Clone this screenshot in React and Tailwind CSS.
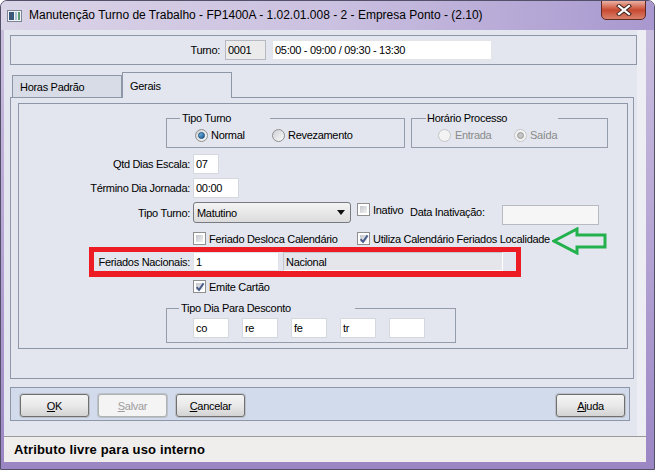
import React from "react";

function Checkbox({ checked }) {
  return (
    <span className="relative block w-[13px] h-[13px] shrink-0 border border-[#8e8f8f] bg-white p-[2px]">
      <span className="block w-full h-full bg-gradient-to-br from-[#c2c6cc] to-[#f2f2f2]" />
      {checked && (
        <svg className="absolute left-[1px] top-[1px]" width="10" height="10" viewBox="0 0 10 10">
          <path d="M1.6 5.2 L4 7.9 L8.6 1.4" fill="none" stroke="#4a5d8c" strokeWidth="2" />
        </svg>
      )}
    </span>
  );
}

function Radio({ checked, disabled }) {
  return (
    <span
      className={
        "flex items-center justify-center w-[13px] h-[13px] rounded-full border shrink-0 " +
        (disabled
          ? "border-[#c3c5c8] bg-[#f3f3f3]"
          : "border-[#8e8f8f] bg-gradient-to-br from-[#cdd0d4] to-[#fbfbfb]")
      }
    >
      {checked && (
        <span
          className={
            "w-[7px] h-[7px] rounded-full border " +
            (disabled
              ? "border-[#9a9a9a] bg-[#c4c4c4]"
              : "border-[#1d4f7c] bg-gradient-to-br from-[#7cc6f2] to-[#1a5289]")
          }
        />
      )}
    </span>
  );
}

function Btn({ children, disabled, className = "" }) {
  return (
    <div
      className={
        "w-[69px] h-[23px] rounded-[3px] border flex items-center justify-center text-[11px] shadow-[0_0_0_1px_#bcc1c8] " +
        (disabled
          ? "border-[#adb2b5] bg-[#f4f4f4] text-[#9c9c9c] "
          : "border-[#707070] bg-gradient-to-b from-[#f5f5f5] via-[#e9e9e9] to-[#d3d3d3] text-black ") +
        className
      }
    >
      {children}
    </div>
  );
}

function Input({ w, value = "", className = "" }) {
  return (
    <div
      className={
        "h-[20px] bg-white border border-[#d5d8de] pl-[2px] flex items-center " + w + " " + className
      }
    >
      {value}
    </div>
  );
}

export default function App() {
  return (
    <div className="w-[655px] h-[470px] bg-white font-['Liberation_Sans',Arial,sans-serif] text-[11px] leading-[14px] tracking-[-0.3px] text-black">
      <div className="w-full h-full flex flex-col rounded-t-[7px] border border-[#55506a] bg-gradient-to-b from-[#cbc1df] via-[#b5a5d4] to-[#9b86c4] overflow-hidden">
        {/* Title bar */}
        <div className="h-[29px] shrink-0 flex items-start bg-gradient-to-r from-[#dad4e7] via-[#cbc1e0] to-[#a898cf]">
          <svg className="mt-[9px] ml-[6px] shrink-0" width="15" height="12" viewBox="0 0 15 12">
            <rect x="0.5" y="0.5" width="14" height="11" fill="#f1f2f5" stroke="#7d8594" />
            <rect x="2" y="2" width="5" height="8" fill="#3b5878" />
            <rect x="8" y="2" width="2" height="8" fill="#a9c4d4" />
            <rect x="11" y="2" width="2" height="8" fill="#5f9a74" />
          </svg>
          <span className="ml-[7px] mt-[7px] text-[12px] leading-[15px] tracking-normal whitespace-nowrap">
            Manutenção Turno de Trabalho - FP1400A - 1.02.01.008 - 2 - Empresa Ponto - (2.10)
          </span>
          <div className="ml-auto mr-[8px] -mt-px w-[45px] h-[20px] rounded-b-[5px] border border-[#5e2a22] bg-gradient-to-b from-[#eab0a2] via-[#c8482f] to-[#d8806b] flex items-center justify-center">
            <svg width="16" height="12" viewBox="0 0 16 12">
              <path d="M3 2 L13 10 M13 2 L3 10" stroke="#4a2a26" strokeWidth="4.2" strokeLinecap="square" />
              <path d="M3 2 L13 10 M13 2 L3 10" stroke="#ffffff" strokeWidth="2.2" strokeLinecap="square" />
            </svg>
          </div>
        </div>

        {/* Client */}
        <div className="ml-[3px] w-[642px] h-[432px] flex flex-col">
          <div className="flex h-[406px] bg-[#e3e6ee]">
            <div className="w-[633px] flex flex-col">
              {/* Top panel */}
              <div className="mt-[5px] ml-[6px] w-[627px] h-[30px] border border-[#8e97a7] flex items-center">
                <span className="w-[209px] text-right">Turno:</span>
                <div className="ml-[5px] w-[41px] h-[20px] bg-[#ebebec] border border-[#b6b9bf] pl-[2px] flex items-center">
                  0001
                </div>
                <div className="ml-[6px] w-[220px] h-[20px] bg-white border border-[#e2e4e8] pl-[2px] flex items-center">
                  05:00 - 09:00 / 09:30 - 13:30
                </div>
              </div>

              {/* Tabs */}
              <div className="mt-[7px] ml-[8px] h-[25px] flex items-end">
                <div className="w-[110px] h-[22px] border border-b-0 border-[#8e97a7] bg-[#d8dce6] flex items-center pl-[7px]">
                  Horas Padrão
                </div>
                <div className="relative z-10 -mb-px w-[110px] h-[26px] border border-b-0 border-[#8e97a7] bg-[#e3e6ee] flex items-center pl-[7px] pt-[1px]">
                  Gerais
                </div>
              </div>

              {/* Tab panel */}
              <div className="ml-[6px] w-[624px] h-[282px] border border-[#8e97a7]">
                <div className="ml-[7px] mt-[5px] w-[610px] h-[246px] border border-[#8e97a7] flex flex-col">
                  {/* group boxes */}
                  <div className="flex mt-[7px] ml-[147px] gap-[6px]">
                    <fieldset className="w-[239px] border border-[#959dab] px-0 pb-[5px]">
                      <legend className="ml-[13px] w-[90px] pl-[2px] leading-[14px]">Tipo Turno</legend>
                      <div className="flex items-center h-[14px] mt-[3px] ml-[28px]">
                        <div className="w-[77px] flex items-center">
                          <Radio checked />
                          <span className="ml-[3px]">Normal</span>
                        </div>
                        <Radio />
                        <span className="ml-[3px]">Revezamento</span>
                      </div>
                    </fieldset>
                    <fieldset className="w-[197px] border border-[#959dab] px-0 pb-[5px]">
                      <legend className="ml-[14px] w-[132px] pl-[1px] leading-[14px]">Horário Processo</legend>
                      <div className="flex items-center h-[14px] mt-[3px] ml-[26px] text-[#8a8a8a]">
                        <div className="w-[76px] flex items-center">
                          <Radio disabled />
                          <span className="ml-[4px]">Entrada</span>
                        </div>
                        <Radio disabled checked />
                        <span className="ml-[3px]">Saída</span>
                      </div>
                    </fieldset>
                  </div>

                  {/* Qtd Dias Escala */}
                  <div className="mt-[6px] h-[20px] flex items-center">
                    <span className="w-[171px] text-right">Qtd Dias Escala:</span>
                    <Input w="w-[26px]" value="07" className="ml-[3px]" />
                  </div>

                  {/* Término */}
                  <div className="mt-[4px] h-[20px] flex items-center">
                    <span className="w-[171px] text-right">Término Dia Jornada:</span>
                    <Input w="w-[46px]" value="00:00" className="ml-[3px]" />
                  </div>

                  {/* Tipo Turno select */}
                  <div className="mt-[4px] h-[21px] flex items-start">
                    <span className="w-[171px] h-[21px] text-right flex items-center justify-end">Tipo Turno:</span>
                    <div className="ml-[3px] w-[158px] h-[21px] rounded-[3px] border border-[#777a80] bg-gradient-to-b from-[#f4f4f4] to-[#dcdcdc] flex items-center pl-[3px]">
                      <span className="flex-1">Matutino</span>
                      <svg className="mr-[5px]" width="8" height="5" viewBox="0 0 8 5">
                        <path d="M0 0 L8 0 L4 5 Z" fill="#111" />
                      </svg>
                    </div>
                    <div className="ml-[6px] mt-[1px] w-[53px] h-[13px] flex items-center">
                      <Checkbox />
                      <span className="ml-[3px]">Inativo</span>
                    </div>
                    <span className="w-[92px] mt-[1px] h-[17px] flex items-center">Data Inativação:</span>
                    <div className="mt-[3px] w-[97px] h-[20px] bg-[#f6f6f7] border border-[#b7bac1]" />
                  </div>

                  {/* checkboxes row */}
                  <div className="mt-[9px] h-[13px] flex items-center">
                    <div className="ml-[174px] w-[164px] flex items-center">
                      <Checkbox />
                      <span className="ml-[3px] whitespace-nowrap">Feriado Desloca Calendário</span>
                    </div>
                    <Checkbox checked />
                    <span className="ml-[3px] whitespace-nowrap">Utiliza Calendário Feriados Localidade</span>
                    <svg className="ml-[2px] self-start -mt-[5px] shrink-0" width="56" height="28" viewBox="0 0 56 28">
                      <polygon
                        points="2,14 25,2 25,8 53,8 53,20 25,20 25,26"
                        fill="none"
                        stroke="#22b14c"
                        strokeWidth="3"
                        strokeLinejoin="miter"
                      />
                    </svg>
                  </div>

                  {/* red box */}
                  <div className="mt-[2px] ml-[70px] w-[432px] h-[30px] border-x-[5px] border-t-[5px] border-b-[6px] border-[#ed1c24] flex items-center">
                    <span className="w-[96px] text-right whitespace-nowrap">Feriados Nacionais:</span>
                    <div className="ml-[3px] w-[86px] h-[19px] bg-white border border-[#e0e2e7] pl-[2px] flex items-center">
                      1
                    </div>
                    <div className="ml-[4px] w-[220px] h-[19px] bg-[#e4e6ec] border border-[#c3c6cd] border-b-white border-r-white pl-[2px] flex items-center">
                      Nacional
                    </div>
                  </div>

                  {/* Emite cartão */}
                  <div className="mt-[3px] h-[13px] flex items-center">
                    <div className="ml-[174px] flex items-center">
                      <Checkbox checked />
                      <span className="ml-[3px]">Emite Cartão</span>
                    </div>
                  </div>

                  {/* Tipo Dia Para Desconto */}
                  <fieldset className="mt-[8px] ml-[147px] w-[290px] border border-[#959dab] px-0 pb-[4px]">
                    <legend className="ml-[12px] w-[176px] pl-[2px] leading-[14px]">Tipo Dia Para Desconto</legend>
                    <div className="mt-[3px] ml-[26px] flex gap-[13px]">
                      <Input w="w-[36px]" value="co" />
                      <Input w="w-[36px]" value="re" />
                      <Input w="w-[36px]" value="fe" />
                      <Input w="w-[36px]" value="tr" />
                      <Input w="w-[36px]" value="" />
                    </div>
                  </fieldset>
                </div>
              </div>

              {/* Button panel */}
              <div className="mt-[8px] ml-[6px] w-[620px] h-[34px] border border-[#8e97a7] bg-[#d2dbeb] flex items-start pt-[6px] pl-[9px] pr-[4px]">
                <Btn>
                  <span className="underline">O</span>K
                </Btn>
                <Btn disabled className="ml-[9px]">
                  <span className="underline">S</span>alvar
                </Btn>
                <Btn className="ml-[9px]">
                  <span className="underline">C</span>ancelar
                </Btn>
                <Btn className="ml-auto">
                  <span className="underline">A</span>juda
                </Btn>
              </div>
            </div>
            <div className="flex-1 bg-[#eceef3]" />
          </div>

          {/* Status bar */}
          <div className="h-[26px] border-t border-[#9a9a9a] bg-[#f0eeed] flex items-center pl-[10px] text-[13px] leading-[16px] tracking-[0.15px] font-bold">
            Atributo livre para uso interno
          </div>
        </div>
      </div>
    </div>
  );
}
